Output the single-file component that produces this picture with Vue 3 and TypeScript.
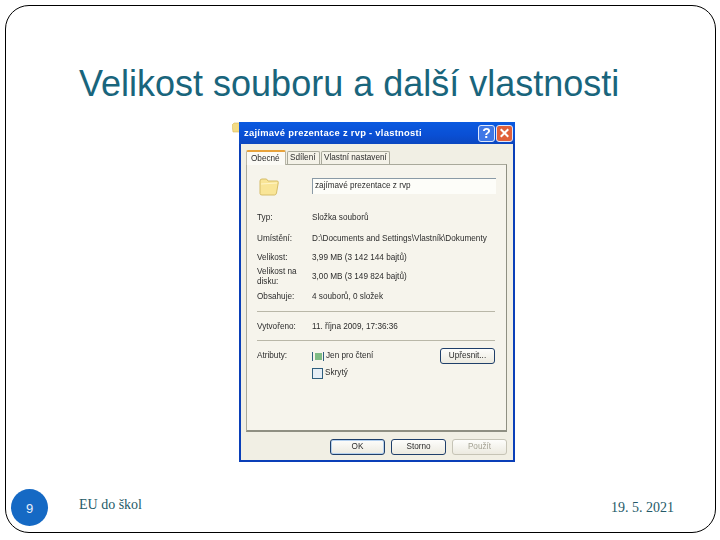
<script setup lang="ts">
interface Row { label: string; value: string; kind: string }
const groupOne: Row[] = [
  { label: 'Umístění:', value: 'D:\\Documents and Settings\\Vlastník\\Dokumenty', kind: 'um' },
  { label: 'Velikost:', value: '3,99 MB (3 142 144 bajtů)', kind: 'vel' },
  { label: 'Velikost na disku:', value: '3,00 MB (3 149 824 bajtů)', kind: 'tall' },
  { label: 'Obsahuje:', value: '4 souborů, 0 složek', kind: 'obs' },
]
</script>

<template>
  <div class="page">
    <div class="slide">
      <h1 class="title">Velikost souboru a další vlastnosti</h1>
      <main class="stage">
        <div class="dialog-wrap">
          <svg class="corner-folder" viewBox="0 0 8 11" width="8" height="11">
            <path d="M0 3 L2 1 H8 V10 H1 Z" fill="#f4dc85" stroke="#d8bb5c" stroke-width=".6" />
          </svg>
          <section class="dialog">
            <header class="titlebar">
              <span class="caption">zajímavé prezentace z rvp - vlastnosti</span>
              <span class="tb-btn help">?</span>
              <span class="tb-btn close">
                <svg viewBox="0 0 16 16" width="16" height="16">
                  <path d="M4 4 L12 12 M12 4 L4 12" stroke="#fff" stroke-width="2.2" />
                </svg>
              </span>
            </header>
            <div class="client">
              <nav class="tabs">
                <span class="tab active">Obecné</span>
                <span class="tab t2">Sdílení</span>
                <span class="tab t3">Vlastní nastavení</span>
              </nav>
              <div class="panel">
                <div class="name-row">
                  <svg class="folder" viewBox="0 0 20 18" width="20" height="18">
                    <path d="M1 5 L1 15.5 Q1 17 3 17 L15.5 17 Q17 17 17.5 15 L19.3 4.5 Q19.5 3 18 3 L9 3 L7.5 1 L3 1 Q1 1 1 3 Z" fill="#f9e597" stroke="#d6bd68" stroke-width="1" />
                    <path d="M2 6 L18 5" stroke="#fff5c8" stroke-width="1.2" />
                  </svg>
                  <div class="name-input">zajímavé prezentace z rvp</div>
                </div>
                <div class="row first"><span class="lbl">Typ:</span><span>Složka souborů</span></div>
                <div v-for="r in groupOne" :key="r.label" class="row" :class="r.kind">
                  <span class="lbl">{{ r.label }}</span><span>{{ r.value }}</span>
                </div>
                <hr class="sep" />
                <div class="row created"><span class="lbl">Vytvořeno:</span><span>11. října 2009, 17:36:36</span></div>
                <hr class="sep s2" />
                <div class="attrs">
                  <span class="lbl">Atributy:</span>
                  <div class="checks">
                    <div class="check"><span class="box mixed"><i></i></span>Jen pro čtení</div>
                    <div class="check"><span class="box"></span>Skrytý</div>
                  </div>
                  <span class="btn adv">Upřesnit...</span>
                </div>
              </div>
              <footer class="buttons">
                <span class="btn ok">OK</span>
                <span class="btn">Storno</span>
                <span class="btn off">Použít</span>
              </footer>
            </div>
          </section>
        </div>
      </main>
      <footer class="foot">
        <span class="num">9</span>
        <span class="src">EU do škol</span>
        <span class="date">19. 5. 2021</span>
      </footer>
    </div>
  </div>
</template>

<style>
html, body { margin: 0; background: #fff; }
</style>

<style scoped>
.page { width: 720px; height: 540px; padding: 5px 4px 7px 5px; box-sizing: border-box; background: #fff; overflow: hidden; }
.slide { height: 100%; box-sizing: border-box; border: 1.3px solid #000; border-radius: 24px; display: flex; flex-direction: column; }
.title { margin: 0; padding: 57px 0 0 73px; height: 116px; box-sizing: border-box; font: 400 36px/42px "Liberation Sans", sans-serif; color: #19657c; white-space: nowrap; }
.stage { flex: 1; min-height: 0; padding-left: 233px; }
.dialog-wrap { position: relative; width: 276px; }
.corner-folder { position: absolute; left: -7px; top: 0; }
.dialog { width: 276px; height: 340px; box-sizing: border-box; border: 2px solid #0a3fb8; border-top: 0; background: #f1efe4; font: 8.2px/10px "Liberation Sans", sans-serif; color: #2c2c2c; display: flex; flex-direction: column; filter: blur(.35px); }
.titlebar { height: 22px; flex: none; margin: 0 -2px; padding: 0 2px 0 5px; display: flex; align-items: center; gap: 1px; background: linear-gradient(#0a5ae0, #0a4fd4 60%, #0b47c0); color: #fff; font-weight: 700; font-size: 9.4px; }
.caption { flex: 1; white-space: nowrap; letter-spacing: .28px; }
.tb-btn { width: 17px; height: 17px; box-sizing: border-box; border: 1px solid #dfe8fb; border-radius: 3px; display: flex; align-items: center; justify-content: center; }
.help { background: #3f78e6; color: #fff; font-size: 14px; }
.close { background: #e0603a; }
.client { flex: 1; display: flex; flex-direction: column; padding: 5px 6px 0 5px; min-height: 0; }
.tabs { display: flex; height: 15px; padding-top: 1px; box-sizing: border-box; flex: none; gap: 1px; align-items: flex-end; }
.tab { height: 13px; box-sizing: border-box; border: 1px solid #a9a99b; border-bottom: 0; border-radius: 2px 2px 0 0; padding: 1px 2px 0; line-height: 10px; background: #f4f2e8; white-space: nowrap; }
.active { width: 40px; height: 15px; padding: 2px 4px 0; background: #fbfaf5; border-color: #b9b7a8; border-top: 2px solid #e8a33c; position: relative; top: 1px; }
.t2 { width: 33px; }
.t3 { width: 69px; }
.panel { height: 268px; flex: none; box-sizing: border-box; border: 1px solid #a9a99b; border-right-color: #8f8f82; border-bottom: 2px solid #8f8f82; background: #f6f4ec; padding: 13px 9px 0 10px; }
.name-row { display: flex; align-items: flex-start; gap: 33px; padding-left: 2px; height: 20px; }
.name-input { width: 184px; height: 16px; box-sizing: border-box; border-top: 1px solid #8a9aa6; border-left: 1px solid #8a9aa6; padding: 2px 2px 0; background: #fdfdf9; }
.row { display: grid; grid-template-columns: 55px 1fr; height: 21px; align-items: center; white-space: nowrap; }
.first { margin-top: 9px; }
.vel { height: 17px; }
.tall { height: 21px; }
.tall .lbl { white-space: normal; width: 42px; line-height: 10px; }
.obs { height: 19px; }
.sep { width: 238px; margin: 5px 0 0; border: 0; border-top: 1px solid #b9b7a8; }
.created { height: 18px; margin-top: 6px; }
.s2 { margin-top: 4px; }
.attrs { display: grid; grid-template-columns: 55px 1fr 55px; align-items: start; width: 238px; margin-top: 7px; }
.attrs .lbl { padding-top: 3px; }
.checks { display: flex; flex-direction: column; gap: 7px; padding-top: 3px; }
.check { display: flex; align-items: center; gap: 2px; height: 10px; }
.box { width: 9px; height: 9px; border: 1px solid #2e5e7e; background: #e6eef6; display: inline-flex; align-items: center; justify-content: center; }
.mixed { border-width: 0 1px; width: 10px; background: #f6f4ec; }
.mixed i { width: 7px; height: 7px; background: #7fbb84; }
.btn { height: 16px; box-sizing: border-box; border: 1px solid #1f3f6a; border-radius: 3px; display: flex; align-items: center; justify-content: center; background: linear-gradient(#fdfdfb, #eceae0); color: #2c2c2c; }
.adv { width: 55px; }
.buttons { flex: none; display: flex; justify-content: flex-end; gap: 6px; margin-top: 7px; }
.buttons .btn { width: 55px; }
.ok { border-color: #1f3f6a; box-shadow: inset 0 0 0 1px #b4d0ee; }
.off { color: #a5a394; border-color: #c6c4b6; }
.foot { height: 37px; margin: 0 0 6px 5px; display: grid; grid-template-columns: 37px 1fr auto; align-items: center; font: 14px/16px "Liberation Serif", serif; color: #245a68; padding-right: 41px; }
.num { width: 37px; height: 37px; border-radius: 50%; background: #1569c4; color: #e8f0fa; font: 13px/39px "Liberation Sans", sans-serif; text-align: center; }
.src { padding-left: 31px; margin-top: -6px; }
</style>
